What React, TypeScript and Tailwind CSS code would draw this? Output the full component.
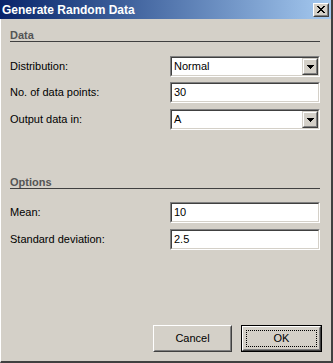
import React from 'react';

const font = { fontFamily: '"Liberation Sans", Arial, sans-serif' };

const Sunken: React.FC<{ children: React.ReactNode }> = ({ children }) => (
  <div className="w-[150px] h-[21px] border border-t-[#808080] border-l-[#808080] border-b-white border-r-white">
    <div className="h-full border border-t-[#404040] border-l-[#404040] border-b-[#d4d0c8] border-r-[#d4d0c8] bg-white flex items-center">
      {children}
    </div>
  </div>
);

const DropArrow: React.FC = () => (
  <div className="w-[16px] h-[17px] border border-t-[#d4d0c8] border-l-[#d4d0c8] border-b-[#404040] border-r-[#404040]">
    <div className="h-full border border-t-white border-l-white border-b-[#808080] border-r-[#808080] bg-[#d4d0c8] flex items-center justify-center">
      <svg width="7" height="4" viewBox="0 0 7 4" shapeRendering="crispEdges">
        <rect x="0" y="0" width="7" height="1" fill="#000" />
        <rect x="1" y="1" width="5" height="1" fill="#000" />
        <rect x="2" y="2" width="3" height="1" fill="#000" />
        <rect x="3" y="3" width="1" height="1" fill="#000" />
      </svg>
    </div>
  </div>
);

const Field: React.FC<{ label: string; value: string; select?: boolean; className?: string }> = ({ label, value, select, className }) => (
  <div className={`flex items-center justify-between h-[21px] ${className ?? ''}`}>
    <span className="text-[11px] text-black">{label}</span>
    <Sunken>
      <span className="flex-1 pl-[2px] text-[11px] text-black leading-none">{value}</span>
      {select && <DropArrow />}
    </Sunken>
  </div>
);

const Heading: React.FC<{ title: string; className?: string }> = ({ title, className }) => (
  <div className={`border-b border-[#404040] h-[13px] flex items-end ${className ?? ''}`}>
    <span className="text-[11px] font-bold text-[#555555] leading-[12px]">{title}</span>
  </div>
);

const Button: React.FC<{ label: string; primary?: boolean }> = ({ label, primary }) =>
  primary ? (
    <div className="w-[81px] h-[27px] border border-black">
      <div className="h-full border border-t-white border-l-white border-b-[#404040] border-r-[#404040]">
        <div className="h-full border border-t-[#d4d0c8] border-l-[#d4d0c8] border-b-[#808080] border-r-[#808080] bg-[#d4d0c8] p-[2px]">
          <div className="h-full border border-dotted border-black flex items-center justify-center text-[11px] text-black">
            {label}
          </div>
        </div>
      </div>
    </div>
  ) : (
    <div className="w-[79px] h-[27px] border border-t-white border-l-white border-b-[#404040] border-r-[#404040]">
      <div className="h-full border border-t-[#d4d0c8] border-l-[#d4d0c8] border-b-[#808080] border-r-[#808080] bg-[#d4d0c8] flex items-center justify-center text-[11px] text-black">
        {label}
      </div>
    </div>
  );

export default function App() {
  return (
    <div style={font} className="w-[333px] h-[363px] flex flex-col bg-[#d4d0c8] border-l border-l-white border-r-2 border-b-2 border-r-[#404040] border-b-[#404040] select-none">
      <div className="h-[19px] flex items-center justify-between bg-gradient-to-r from-[#0a246a] to-[#a6caf0] pl-[2px] pr-[2px] -ml-px">
        <span className="text-[12px] font-bold text-white">Generate Random Data</span>
        <div className="w-[16px] h-[14px] border border-t-white border-l-white border-b-[#404040] border-r-[#404040]">
          <div className="h-full border border-t-[#d4d0c8] border-l-[#d4d0c8] border-b-[#808080] border-r-[#808080] bg-[#d4d0c8] flex items-center justify-center">
            <svg width="8" height="7" viewBox="0 0 8 7" shapeRendering="crispEdges">
              <path d="M0 0h2v1H0zM6 0h2v1H6zM1 1h2v1H1zM5 1h2v1H5zM2 2h4v1H2zM3 3h2v1H3zM2 4h4v1H2zM1 5h2v1H1zM5 5h2v1H5zM0 6h2v1H0zM6 6h2v1H6z" fill="#000" />
            </svg>
          </div>
        </div>
      </div>

      <div className="flex flex-col pl-[9px] pr-[11px] flex-1">
        <Heading title="Data" className="mt-[10px]" />
        <Field label="Distribution:" value="Normal" select className="mt-[14px]" />
        <Field label="No. of data points:" value="30" className="mt-[5px]" />
        <Field label="Output data in:" value="A" select className="mt-[6px]" />

        <Heading title="Options" className="mt-[46px]" />
        <Field label="Mean:" value="10" className="mt-[13px]" />
        <Field label="Standard deviation:" value="2.5" className="mt-[6px]" />

        <div className="flex-1" />
        <div className="flex justify-end gap-[9px] mb-[9px] -mr-[2px]">
          <Button label="Cancel" />
          <Button label="OK" primary />
        </div>
      </div>
    </div>
  );
}
